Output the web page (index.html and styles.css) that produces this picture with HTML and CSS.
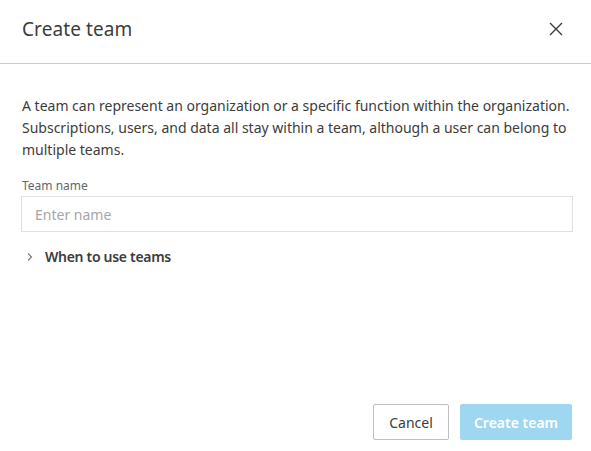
FILE: index.html
```html
<!DOCTYPE html>
<html>
<head>
<meta charset="utf-8">
<link rel="stylesheet" href="styles.css">
</head>
<body>
<div class="dialog">
  <header class="header">
    <h1 class="title">Create team</h1>
    <button class="close" aria-label="Close">
      <svg width="14" height="14" viewBox="0 0 14 14"><path d="M1 1L13 13M13 1L1 13" stroke="#3c3c3c" stroke-width="1.4" fill="none"/></svg>
    </button>
  </header>
  <main class="body">
    <p class="desc">A team can represent an organization or a specific function within the organization. Subscriptions, users, and data all stay within a team, although a user can belong to multiple teams.</p>
    <label class="label" for="tn">Team name</label>
    <input class="input" id="tn" type="text" placeholder="Enter name">
    <div class="accordion">
      <svg class="chev" width="8" height="10" viewBox="0 0 8 10"><path d="M2 1.5L5.5 5L2 8.5" stroke="#808080" stroke-width="1.2" fill="none"/></svg>
      <span class="acc-text">When to use teams</span>
    </div>
  </main>
  <footer class="footer">
    <button class="btn btn-secondary">Cancel</button>
    <button class="btn btn-primary">Create team</button>
  </footer>
</div>
</body>
</html>
```
FILE: styles.css
```css
* { box-sizing: border-box; }
html, body { margin: 0; padding: 0; background: #fff; }
body {
  font-family: "Noto Sans", "Open Sans", sans-serif;
  color: #3c3c3c;
  width: 591px;
  height: 451px;
  overflow: hidden;
}
.dialog {
  display: flex;
  flex-direction: column;
  height: 451px;
}
.header {
  display: flex;
  align-items: center;
  justify-content: space-between;
  height: 64px;
  padding: 0 28px 6px 22px;
  border-bottom: 1px solid #cccccc;
}
.title {
  margin: 0;
  font-size: 19px;
  font-weight: 400;
  letter-spacing: 0.1px;
}
.close {
  border: 0;
  background: none;
  padding: 0;
  width: 14px;
  height: 14px;
  display: flex;
}
.body {
  flex: 1;
  padding: 31px 18px 0 22px;
}
.desc {
  margin: 0;
  font-size: 14px;
  line-height: 22px;
}
.label {
  display: block;
  margin-top: 17px;
  font-size: 12px;
  line-height: 16px;
  color: #666;
}
.input {
  display: block;
  width: 552px;
  height: 36px;
  margin: 2px 0 0 -1px;
  border: 1px solid #e0e0e0;
  padding: 0 13px;
  font-family: inherit;
  font-size: 14px;
  color: #3c3c3c;
  outline: none;
}
.input::placeholder { color: #a6a6a6; }
.accordion {
  display: flex;
  align-items: center;
  gap: 11px;
  margin-top: 15px;
  padding-left: 4px;
}
.chev { display: block; }
.acc-text {
  font-size: 14px;
  font-weight: 600;
  line-height: 20px;
  letter-spacing: -0.3px;
}
.footer {
  display: flex;
  justify-content: flex-end;
  gap: 11px;
  padding: 0 19px 11px 0;
}
.btn {
  height: 36px;
  font-family: inherit;
  font-size: 14px;
  border-radius: 2px;
  padding: 0;
  white-space: nowrap;
}
.btn-secondary {
  width: 76px;
  background: #fff;
  border: 1px solid #bfbfbf;
  color: #3c3c3c;
}
.btn-primary {
  width: 112px;
  background: #9fd6f0;
  border: 0;
  color: #fff;
  font-weight: 600;
}
```
